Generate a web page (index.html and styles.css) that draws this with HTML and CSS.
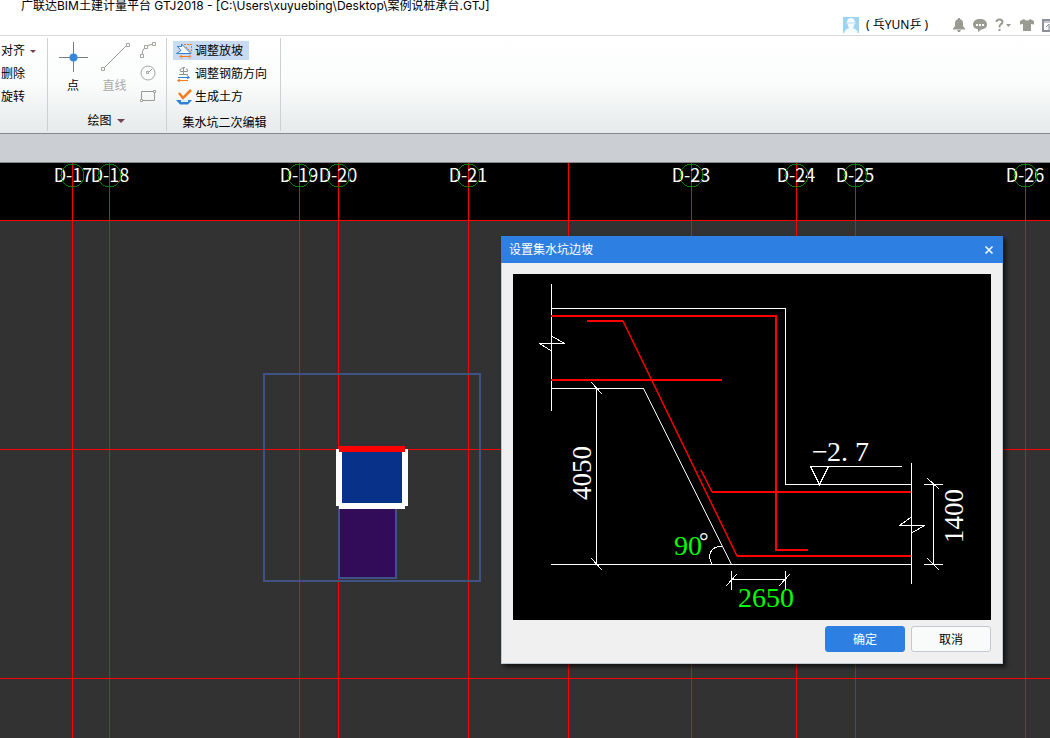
FILE: index.html
```html
<!DOCTYPE html>
<html lang="zh-CN">
<head>
<meta charset="utf-8">
<title>广联达BIM土建计量平台 GTJ2018</title>
<link rel="stylesheet" href="styles.css">
</head>
<body>
<div class="app">
  <header class="titlebar">
    <h1 class="title">广联达BIM土建计量平台 GTJ2018 - [C:\Users\xuyuebing\Desktop\案例说桩承台.GTJ]</h1>
    <div class="account">
      <svg class="avatar" width="16" height="16" viewBox="0 0 16 16"><rect width="16" height="16" fill="#9bd4f5"/><path d="M4 5.500Q4 1 8 1T12 5.500L13 6L11.500 7Q11 10 9.500 11Q14 12 15 16H1Q2 12 6.500 11Q5 10 4.500 7L3 6Z" fill="#f4fafe"/><path d="M4 6h8" stroke="#b9dff5"/></svg>
      <span class="user">( 乓YUN乒 )</span>
      <button class="tool bell" aria-label="通知"><svg width="12" height="14" viewBox="0 0 12 14"><path d="M5 0h2v1Q10 2 10 5v3l2 2.500V11.500H0v-1L2 8V5Q2 2 5 1ZM4 12h4L7 14H5Z"/></svg></button>
      <button class="tool chat" aria-label="消息"><svg width="14" height="14" viewBox="0 0 14 14"><path d="M7 1c4 0 7 2 7 5.500 0 3-2.500 4.500-5.500 5L5 14v-2.700C2 11 0 9.300 0 6.500 0 3 3 1 7 1Z"/><path d="M3 6h2v2H3zM6 6h2v2H6zM9 6h2v2H9z" fill="#fff"/></svg></button>
      <button class="tool help" aria-label="帮助"><svg width="17" height="14" viewBox="0 0 17 14"><path d="M1.500 4Q1.500 1.500 4.500 1.500T7.500 4Q7.500 5.500 5.500 6.500Q4.500 7.200 4.500 9.500" fill="none" stroke="#9a9b92" stroke-width="2"/><path d="M3.500 11h2v2h-2zM11 6h5l-2.500 3z"/></svg></button>
      <button class="tool skin" aria-label="皮肤"><svg width="14" height="14" viewBox="0 0 14 14"><path d="M4 1Q7 4 10 1L14 3V6.500L11 6V13H3V6L0 6.500V3Z"/></svg></button>
      <button class="tool window" aria-label="窗口"><svg width="12" height="13" viewBox="0 0 12 13"><path d="M1 1h10v11H1z" fill="none" stroke="#8b909b" stroke-width="2"/><path d="M1 3h10M4 8l3-3v6M7 8h4" fill="none" stroke="#8b909b"/></svg></button>
    </div>
  </header>

  <nav class="ribbon">
    <section class="group modify">
      <button class="cmd">对齐 <i class="caret"></i></button>
      <button class="cmd">删除</button>
      <button class="cmd">旋转</button>
    </section>
    <section class="group draw">
      <div class="drawtools">
        <button class="big"><svg width="30" height="30" viewBox="0 0 30 30"><path d="M15.500 0v30M1 15.500h29" stroke="#777b7d"/><circle cx="15.500" cy="15.500" r="4" fill="#3388dc"/></svg>点</button>
        <button class="big disabled" disabled><svg width="30" height="30" viewBox="0 0 30 30"><path d="M4 26L26 4" stroke="#999"/><path d="M1.500 25.500h3v3h-3zM26.500 1.500h3v3h-3z" fill="#fff" stroke="#a2a39b"/></svg>直线</button>
        <div class="shapes">
          <button aria-label="弧"><svg width="16" height="16" viewBox="0 0 16 16"><path d="M2 13Q2 4 13 2" fill="none" stroke="#999"/><path d="M.5 12.500h3v3h-3zM12.500.5h3v3h-3zM4.500 3.500h3v3h-3z" fill="#fff" stroke="#a2a39b"/></svg></button>
          <button aria-label="圆"><svg width="16" height="16" viewBox="0 0 16 16"><circle cx="8" cy="8" r="7" fill="none" stroke="#a5a5a5"/><path d="M8 8l4-4" stroke="#999"/><path d="M6.500 6.500h2v2h-2z" fill="#fff" stroke="#a2a39b"/></svg></button>
          <button aria-label="矩形"><svg width="16" height="16" viewBox="0 0 16 16"><path d="M1.500 3.500h13v9h-13z" fill="none" stroke="#999"/><path d="M.5 11.500h2v2h-2zM13.500 2.500h2v2h-2z" fill="#fff" stroke="#a2a39b"/></svg></button>
        </div>
      </div>
      <div class="caption">绘图 <i class="caret wide"></i></div>
    </section>
    <section class="group pit">
      <div class="cmds">
        <button class="edit active"><svg width="16" height="16" viewBox="0 0 16 16"><path d="M1 3.500H5.500V1L15 10.500H.5L5 7.500L1.500 3.500" fill="#f4f8ff" stroke="#3181d5"/><path d="M8 1.500h7.500v8M10 4l5 5" fill="none" stroke="#f47a20" stroke-dasharray="2 1"/><path d="M4 13.500h10M6 11.500L4 13.500 6 15.500M13 11.500l2 2-2 2" fill="none" stroke="#f47a20"/></svg>调整放坡</button>
        <button class="edit"><svg width="16" height="16" viewBox="0 0 16 16"><path d="M7.500 2v6M4.500 5.500h7Q12.500 3 10 3M4.500 5.500Q3 3 5.500 3Q6 1 9 1.500M3 8.500h9" fill="none" stroke="#8f9391"/><path d="M2 11.500h11M11 9.500l2.500 2-2.500 1" fill="none" stroke="#3181d5"/><path d="M2 14.500h10M4 13l-2.500 1.500L4 16" fill="none" stroke="#f47a20"/></svg>调整钢筋方向</button>
        <button class="edit"><svg width="16" height="16" viewBox="0 0 16 16"><path d="M3 4l4 5 8-8" fill="none" stroke="#f47a20" stroke-width="2.500"/><path d="M0 11h16l-4 4.500H4Z" fill="#2f83d4"/><path d="M5 11h7v2H5z" fill="#dfeef9"/></svg>生成土方</button>
      </div>
      <div class="caption">集水坑二次编辑</div>
    </section>
  </nav>
  <div class="strip"></div>

  <main class="viewport">
    <svg class="plan" shape-rendering="crispEdges">
      <rect width="100%" height="58" fill="#000"/>
      <g class="axis">
        <path d="M0 57.500H4000M0 286.500H4000M0 515.500H4000"/>
        <path d="M72.500 0V3000M109.500 0V3000M299.500 0V3000M338.500 0V3000M468.500 0V3000M568.500 0V3000M691.500 0V3000M796.500 0V3000M855.500 0V3000M1025.500 0V3000"/>
      </g>
      <g class="tag">
        <text x="73" y="19">D-17</text><text x="110" y="19">D-18</text><text x="299" y="19">D-19</text><text x="338" y="19">D-20</text><text x="468" y="19">D-21</text><text x="691" y="19">D-23</text><text x="796" y="19">D-24</text><text x="855" y="19">D-25</text><text x="1025" y="19">D-26</text>
      </g>
      <g class="bubble">
        <circle cx="72.500" cy="12.500" r="11.500"/><circle cx="109.500" cy="12.500" r="11.500"/><circle cx="299.500" cy="12.500" r="11.500"/><circle cx="338.500" cy="12.500" r="11.500"/><circle cx="468.500" cy="12.500" r="11.500"/><circle cx="691.500" cy="12.500" r="11.500"/><circle cx="796.500" cy="12.500" r="11.500"/><circle cx="855.500" cy="12.500" r="11.500"/><circle cx="1025.500" cy="12.500" r="11.500"/>
      </g>
      <rect x="264" y="211" width="216" height="207" class="outline"/>
      <rect x="339" y="343" width="57" height="72" class="outline pile"/>
      <rect x="342" y="289" width="60" height="51" fill="#08328a"/>
      <path d="M339 286v57M405 286v57M339 343h66" stroke="#fff" stroke-width="6"/>
      <path d="M339 286h66" stroke="#f00" stroke-width="6"/>
    </svg>

    <div class="dialog" role="dialog" aria-labelledby="dlg-title">
      <div class="dlg-head">
        <h2 id="dlg-title">设置集水坑边坡</h2>
        <button class="close" aria-label="关闭"><svg width="8" height="8" viewBox="0 0 8 8"><path d="M.5.5l7 7M7.500.5l-7 7" stroke="#fff" stroke-width="1.500"/></svg></button>
      </div>
      <div class="dlg-body">
        <svg class="section" viewBox="513 274 478 346">
          <rect x="513" y="274" width="478" height="346" fill="#000"/>
          <g class="thin" shape-rendering="crispEdges">
            <path d="M551.500 284V411M551.500 308.500H785.500V484.500H911.500M551.500 388.500H643.500M551 564.500H911.500M911.500 463V584"/>
            <path d="M551.500 336L564.500 343.500H539.500L551.500 351"/>
            <path d="M911.500 517L899.500 525.500H924.500L911.500 533"/>
            <path d="M596.500 388V564M591 382L602 394M591 558L602 570"/>
            <path d="M731.500 571V590M785.500 571V590M731.500 579.500H785.500M726 586L737 574M779 586L790 574"/>
            <path d="M933.500 484V564M924 484.500H943M924 564.500H943M927 478L939 489M927 558L939 570"/>
            <path d="M902 466.500H810.500L819.500 484.500L828.500 466.500"/>
            <path d="M712 564C707 556 710 546 722.500 546.500"/>
          </g>
          <path class="thin" d="M643.500 388.500L731.500 564.500"/>
          <g class="bar" shape-rendering="crispEdges">
            <path d="M551 316H776V550H808M551 380H722M587 321H623M737 556H911M712 492H911"/>
          </g>
          <path class="slope" d="M623 321L737 556M701 470L712 492"/>
          <g class="dim">
            <text x="812 827 841 855" y="461">−2.7</text>
            <text class="side" transform="translate(591 500) rotate(-90)">4050</text>
            <text class="side" transform="translate(963 543) rotate(-90)">1400</text>
            <text x="674" y="555" class="input">90</text>
            <text x="699" y="549" class="degree">°</text>
            <text x="738" y="607" class="input">2650</text>
          </g>
        </svg>
        <div class="actions">
          <button class="btn primary">确定</button>
          <button class="btn">取消</button>
        </div>
      </div>
    </div>
  </main>
</div>
</body>
</html>
```
FILE: styles.css
```css
* { box-sizing: border-box; }
body {
  margin: 0;
  font: 12px/16px "Noto Sans", "Noto Sans CJK SC", sans-serif;
  color: #000;
  overflow: hidden;
}
button {
  margin: 0;
  padding: 0;
  border: 0;
  background: none;
  font: inherit;
  color: inherit;
}
svg { display: block; flex: none; }
.app { display: flex; flex-direction: column; height: 100vh; }

.titlebar {
  display: flex;
  justify-content: space-between;
  height: 36px;
  border-bottom: 1px solid #d9d9d9;
  background: #fff;
  overflow: hidden;
}
.title {
  margin: -3px 0 0 21px;
  font-family: Inter, "Noto Sans CJK SC", sans-serif;
  font-size: 12px;
  font-weight: 400;
  line-height: 18px;
  white-space: nowrap;
}
.account { display: flex; align-items: center; padding-top: 15px; margin-right: -4px; }
.user { width: 86px; padding-left: 7px; white-space: nowrap; }
.avatar { flex: none; }
.tool { margin-left: 8px; fill: #9a9b92; }

.ribbon {
  display: flex;
  height: 98px;
  background: linear-gradient(#fff 0%, #fafbfb 50%, #e6eaeb 100%);
  border-bottom: 1px solid #86898c;
}
.group {
  display: flex;
  flex-direction: column;
  justify-content: space-between;
  margin: 2px 0;
  border-right: 1px solid #cdd0d2;
}
.modify { width: 48px; justify-content: flex-start; gap: 3px; padding: 3px 0 0 1px; }
.cmd { display: flex; align-items: center; gap: 5px; height: 20px; }
.caret {
  border: 3px solid transparent;
  border-top-color: #6b4450;
  border-bottom: 0;
}
.caret.wide { border-width: 4px 4px 0; }
.draw { width: 119px; }
.drawtools { display: flex; padding: 4px 0 0 9px; }
.big { display: flex; flex-direction: column; align-items: center; gap: 6px; width: 32px; height: 54px; }
.big.disabled { width: 51px; color: #a9aaa9; }
.shapes { display: flex; flex-direction: column; gap: 7px; }
.caption { display: flex; align-items: center; justify-content: center; gap: 5px; height: 20px; white-space: nowrap; }
.draw .caption { padding-right: 2px; }
.pit { width: 114px; padding: 3px 0 0 6px; }
.pit .caption { height: 17px; padding-right: 4px; }
.cmds { display: flex; flex-direction: column; align-items: flex-start; gap: 4px; }
.edit { display: flex; align-items: center; gap: 3px; height: 19px; padding: 0 6px 0 3px; white-space: nowrap; }
.edit.active { background: #c9daf3; }
.strip { height: 29px; background: #cbced3; border-bottom: 1px solid #85898e; }

.viewport { position: relative; flex: 1; background: #323232; overflow: hidden; }
.plan { width: 100%; height: 100%; }
.axis { stroke: #f00; fill: none; }
.tag { fill: #fff; font: 18px "Noto Sans CJK SC", sans-serif; text-anchor: middle; }
.bubble { stroke: #008000; fill: none; }
.outline { stroke: #405283; stroke-width: 2; fill: none; }
.pile { fill: #330c59; }

.dialog {
  position: absolute;
  left: 501px;
  top: 73px;
  width: 502px;
  background: #f0f0f0;
  box-shadow: 3px 3px 4px rgba(0, 0, 0, .6);
}
.dlg-head {
  display: flex;
  align-items: center;
  justify-content: space-between;
  height: 27px;
  padding: 0 10px 0 8px;
  background: #2d80e2;
  color: #fff;
}
.dlg-head h2 { margin: 0; font-size: 12px; font-weight: 400; }
.dlg-body { padding: 11px 11px; border: 1px solid #c0c7cf; border-top: 0; }
.section { width: 100%; height: auto; }
.thin { stroke: #fff; fill: none; }
.bar { stroke: #f00; stroke-width: 2; fill: none; }
.slope { stroke: #f00; stroke-width: 1.5; fill: none; }
.dim { fill: #fff; font: 28px "Liberation Serif", serif; }
.side { font-size: 27px; }
.input { fill: #0f0; }
.degree { font-size: 24px; }
.actions { display: flex; justify-content: flex-end; gap: 6px; padding-top: 6px; }
.btn {
  width: 80px;
  height: 26px;
  padding-top: 1px;
  border: 1px solid #c3c8d3;
  border-radius: 3px;
  background: #f9fafa;
}
.btn.primary { border-color: #2d80e2; background: #2d80e2; color: #fff; }
```
